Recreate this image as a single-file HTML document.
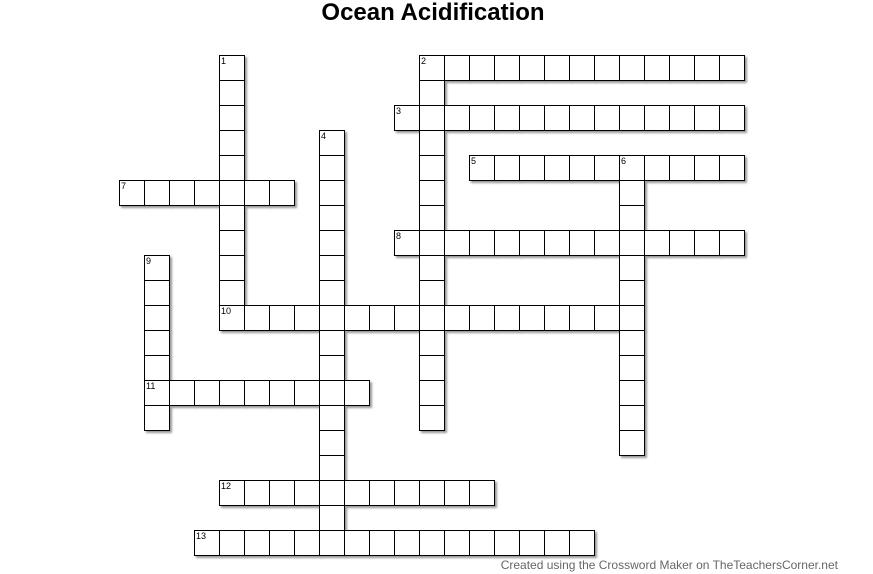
<!DOCTYPE html>
<html><head><meta charset="utf-8"><style>
body{margin:0;width:873px;height:574px;background:#fff;position:relative;overflow:hidden;font-family:"Liberation Sans",sans-serif}
h1{position:absolute;left:0;width:866px;top:0;margin:0;text-align:center;font-size:24px;font-weight:bold;line-height:26px}
.c{position:absolute;width:24px;height:24px;border:1px solid #000;background:#fff;box-shadow:2px 2px 2px #999;box-sizing:content-box}
.n{position:absolute;font-size:9px;line-height:9px;z-index:5;font-family:"Liberation Sans",sans-serif}
.f{position:absolute;right:35px;top:558px;font-size:12px;color:#666}
</style></head><body>
<h1>Ocean Acidification</h1>
<div id="g"></div>
<div class="n" style="left:221px;top:57px">1</div>
<div class="n" style="left:421px;top:57px">2</div>
<div class="n" style="left:396px;top:107px">3</div>
<div class="n" style="left:321px;top:132px">4</div>
<div class="n" style="left:471px;top:157px">5</div>
<div class="n" style="left:621px;top:157px">6</div>
<div class="n" style="left:121px;top:182px">7</div>
<div class="n" style="left:396px;top:232px">8</div>
<div class="n" style="left:146px;top:257px">9</div>
<div class="n" style="left:221px;top:307px">10</div>
<div class="n" style="left:146px;top:382px">11</div>
<div class="n" style="left:221px;top:482px">12</div>
<div class="n" style="left:196px;top:532px">13</div>
<div class="f">Created using the Crossword Maker on TheTeachersCorner.net</div>
<script>
var W=[[4,0,11,'d'],[12,0,13,'a'],[12,0,15,'d'],[11,2,14,'a'],[8,3,17,'d'],[14,4,11,'a'],[20,4,12,'d'],[0,5,7,'a'],[11,7,14,'a'],[1,8,7,'d'],[4,10,17,'a'],[1,13,9,'a'],[4,17,11,'a'],[3,19,16,'a']];
var s={},h='';
W.forEach(function(w){for(var i=0;i<w[2];i++){var c=w[0]+(w[3]=='a'?i:0),r=w[1]+(w[3]=='d'?i:0);s[c+','+r]=[c,r];}});
var k=Object.keys(s).map(function(x){return s[x]}).sort(function(a,b){return a[1]-b[1]||a[0]-b[0]});
k.forEach(function(p){h+='<div class="c" style="left:'+(119+25*p[0])+'px;top:'+(55+25*p[1])+'px"></div>';});
document.getElementById('g').innerHTML=h;
</script>
</body></html>
